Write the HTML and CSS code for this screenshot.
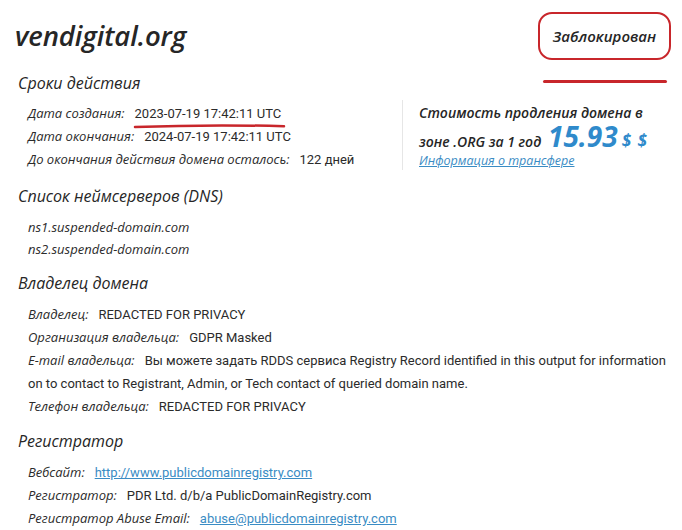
FILE: index.html
```html
<!DOCTYPE html>
<html lang="ru">
<head>
  <meta charset="UTF-8" />
  <title>vendigital.org — Whois</title>
  <meta name="viewport" content="width=device-width, initial-scale=1.0" />
  <link rel="stylesheet" href="styles.css">
</head>
<body>
  <div class="page">

    <div class="top">
      <h1 class="domain">vendigital.org</h1>
      <div class="status">
        Заблокирован
        <span class="status-mark"></span>
      </div>
    </div>

    <!-- Сроки -->
    <h2 class="section-title">Сроки действия</h2>
    <div class="dates">
      <div class="rows">
        <div class="row"><span class="label">Дата создания:</span><span class="value marked">2023-07-19 17:42:11 UTC<svg class="scribble" viewBox="0 0 154 6" preserveAspectRatio="none"><path d="M2 4 C40 2.6, 90 1.6, 152 3.2" /></svg></span></div>
        <div class="row"><span class="label">Дата окончания:</span><span class="value">2024-07-19 17:42:11 UTC</span></div>
        <div class="row"><span class="label">До окончания действия домена осталось:</span><span class="value">122 дней</span></div>
      </div>
      <div class="price">
        <div class="price-line">Стоимость продления домена в</div>
        <div class="price-line">зоне .ORG за 1 год <span class="price-num">15.93</span><span class="price-cur">$ $</span></div>
        <a class="price-link" href="#">Информация о трансфере</a>
      </div>
    </div>

    <h2 class="section-title">Список неймсерверов (DNS)</h2>
    <div class="rows">
      <div class="row ns">ns1.suspended-domain.com</div>
      <div class="row ns">ns2.suspended-domain.com</div>
    </div>

    <h2 class="section-title">Владелец домена</h2>
    <div class="rows">
      <div class="row"><span class="label">Владелец:</span><span class="value">REDACTED FOR PRIVACY</span></div>
      <div class="row"><span class="label">Организация владельца:</span><span class="value">GDPR Masked</span></div>
      <div class="row"><span class="label">E-mail владельца:</span><span class="value">Вы можете задать RDDS сервиса Registry Record identified in this output for information on to contact to Registrant, Admin, or Tech contact of queried domain name.</span></div>
      <div class="row"><span class="label">Телефон владельца:</span><span class="value">REDACTED FOR PRIVACY</span></div>
    </div>

    <h2 class="section-title">Регистратор</h2>
    <div class="rows">
      <div class="row"><span class="label">Вебсайт:</span><a class="value link" href="#">http://www.publicdomainregistry.com</a></div>
      <div class="row"><span class="label">Регистратор:</span><span class="value">PDR Ltd. d/b/a PublicDomainRegistry.com</span></div>
      <div class="row"><span class="label">Регистратор Abuse Email:</span><a class="value link" href="#">abuse@publicdomainregistry.com</a></div>
    </div>

  </div>
</body>
</html>
```

FILE: styles.css
```css
body {
  margin: 0;
  background: #fff;
  color: #2b2b2b;
  font-family: "Open Sans", "Noto Sans", sans-serif;
}

.page {
  padding: 12px 11px 0 15px;
}

.top {
  display: flex;
  justify-content: space-between;
  align-items: center;
  height: 48px;
}

.domain {
  margin: -2px 0 0;
  font-size: 27.5px;
  font-weight: 600;
  font-style: italic;
  letter-spacing: -0.1px;
  color: #262626;
}

/* Status badge */
.status {
  position: relative;
  box-sizing: border-box;
  height: 48px;
  width: 133px;
  display: flex;
  align-items: center;
  justify-content: center;
  border: 2px solid #c8262b;
  border-radius: 14px;
  font-size: 15px;
  font-weight: 600;
  font-style: italic;
  color: #262626;
}

.status-mark {
  position: absolute;
  left: 3px;
  right: 2px;
  top: 66px;
  height: 3px;
  border-radius: 2px;
  background: #c8262b;
}

.section-title {
  margin: 11px 0 8px 3px;
  font-size: 16px;
  line-height: 24px;
  font-weight: 500;
  font-style: italic;
  color: #262626;
}

.rows {
  padding-left: 13px;
}

.row {
  font-family: Roboto, "Noto Sans", sans-serif;
  font-size: 13px;
  line-height: 23px;
  color: #2b2b2b;
}

.label {
  font-family: "Open Sans", "Noto Sans", sans-serif;
  font-style: italic;
  margin-right: 10px;
}

.row.ns {
  font-family: "Open Sans", "Noto Sans", sans-serif;
  font-style: italic;
  line-height: 22px;
}

.link {
  color: #3a8cc4;
  text-decoration: underline;
}

.marked {
  position: relative;
}

.scribble {
  position: absolute;
  left: -2px;
  top: 17px;
  width: 153px;
  height: 6px;
  overflow: visible;
}

.scribble path {
  fill: none;
  stroke: #c8262b;
  stroke-width: 2.5;
  stroke-linecap: round;
}

/* Dates and price */
.dates {
  display: flex;
  align-items: flex-start;
  margin: -1px 0 13px;
}

.dates .rows {
  width: 374px;
  flex-shrink: 0;
}

.price {
  height: 70px;
  margin-top: -2px;
  padding-left: 16px;
  border-left: 1px solid #e6e6e6;
  font-style: italic;
}

.price-line {
  height: 26px;
  font-size: 14px;
  font-weight: 600;
  line-height: 26px;
  color: #262626;
  white-space: nowrap;
}

.price-num {
  font-size: 28px;
  font-weight: 700;
  line-height: 20px;
  color: #2f8acb;
  margin-left: 3px;
}

.price-cur {
  font-size: 17px;
  font-weight: 700;
  line-height: 20px;
  color: #2f8acb;
  margin-left: 4px;
  letter-spacing: 1px;
}

.price-link {
  display: block;
  margin-top: 0;
  font-size: 12.5px;
  line-height: 18px;
  color: #3a8cc4;
}
```
